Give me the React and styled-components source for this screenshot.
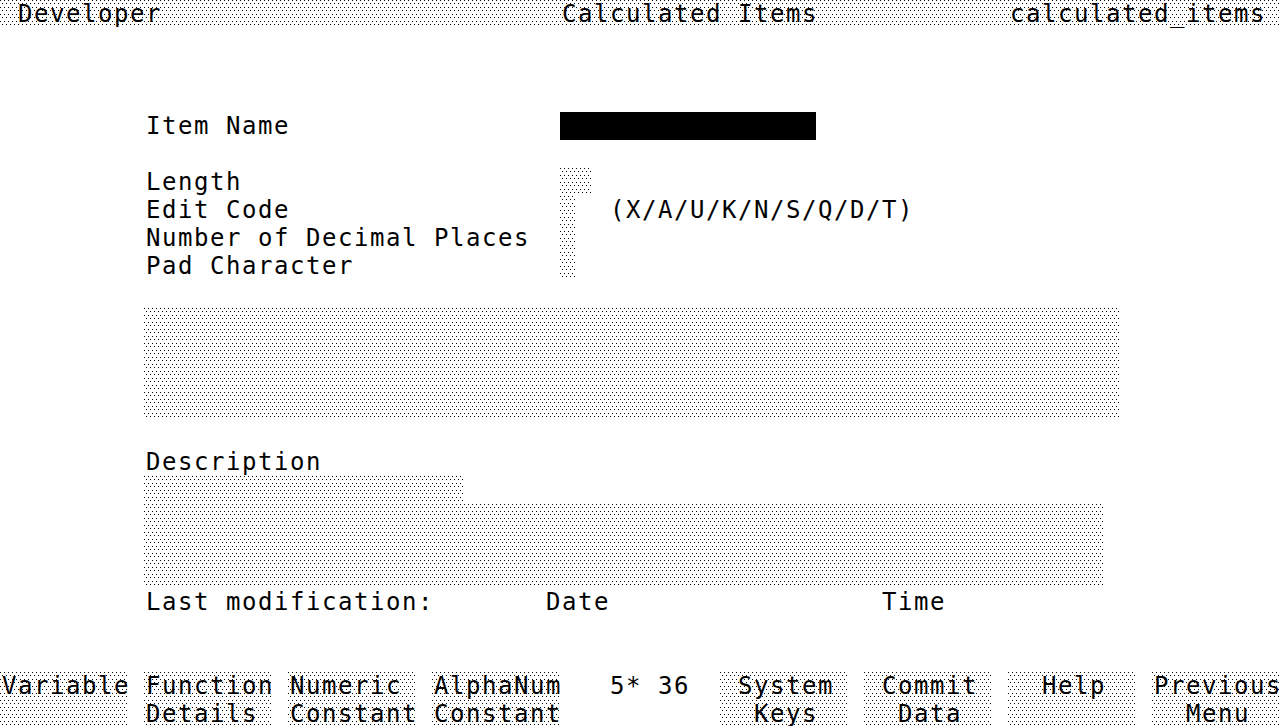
import React from "react";
import styled, { createGlobalStyle } from "styled-components";

// terminal cell: 16px wide, 28px tall, 80 x 26 screen
const COLS = 80;
const ROWS = 26;

const GlobalStyle = createGlobalStyle`
  html, body {
    margin: 0;
    padding: 0;
    background: #ffffff;
    overflow: hidden;
  }
`;

const dots = `
  background-color: #ffffff;
  background-image:
    conic-gradient(at 1px 1px, transparent 75%, #000 0),
    conic-gradient(at 1px 1px, transparent 75%, #000 0);
  background-size: 4px 7px;
  background-position: 0 0, 2px 3px;
`;

const Screen = styled.div`
  display: grid;
  grid-template-columns: repeat(${COLS}, 16px);
  grid-template-rows: repeat(${ROWS}, 28px);
  width: 1280px;
  height: 728px;
  font-family: "DejaVu Sans Mono", "Liberation Mono", monospace;
  font-size: 24px;
  line-height: 28px;
  letter-spacing: 1.552px;
  color: #000;
  white-space: pre;
`;

const TitleBar = styled.div`
  grid-column: 1 / -1;
  grid-row: 1;
  display: grid;
  grid-template-columns: repeat(${COLS}, 16px);
  ${dots}
`;

const TitleText = styled.span`
  grid-column: ${(p) => p.$col} / span ${(p) => p.$len};
  grid-row: 1;
  padding-left: 2px;
`;

const Label = styled.span`
  grid-column: ${(p) => p.$col} / span ${(p) => p.$len};
  grid-row: ${(p) => p.$row};
  padding-left: 2px;
`;

const Field = styled.div`
  grid-column: ${(p) => p.$col} / span ${(p) => p.$span};
  grid-row: ${(p) => p.$row} / span ${(p) => p.$rows || 1};
  ${(p) => (p.$filled ? "background: #000;" : dots)}
`;

const SoftKey = styled.div`
  grid-column: ${(p) => p.$col} / span 8;
  grid-row: 25 / span 2;
  display: flex;
  flex-direction: column;
  ${dots}
`;

const KeyLine = styled.span`
  height: 28px;
  padding-left: 2px;
`;

const softKeys = [
  { col: 1, lines: ["Variable", ""] },
  { col: 10, lines: ["Function", "Details"] },
  { col: 19, lines: ["Numeric", "Constant"] },
  { col: 28, lines: ["AlphaNum", "Constant"] },
  { col: 46, lines: [" System", "  Keys"] },
  { col: 55, lines: [" Commit", "  Data"] },
  { col: 64, lines: ["  Help", ""] },
  { col: 73, lines: ["Previous", "  Menu"] },
];

const labels = [
  { col: 10, row: 5, text: "Item Name" },
  { col: 10, row: 7, text: "Length" },
  { col: 10, row: 8, text: "Edit Code" },
  { col: 39, row: 8, text: "(X/A/U/K/N/S/Q/D/T)" },
  { col: 10, row: 9, text: "Number of Decimal Places" },
  { col: 10, row: 10, text: "Pad Character" },
  { col: 10, row: 17, text: "Description" },
  { col: 10, row: 22, text: "Last modification:" },
  { col: 35, row: 22, text: "Date" },
  { col: 56, row: 22, text: "Time" },
  { col: 39, row: 25, text: "5* 36" },
];

const fields = [
  { col: 36, row: 5, span: 16, filled: true },
  { col: 36, row: 7, span: 2 },
  { col: 36, row: 8, span: 1 },
  { col: 36, row: 9, span: 1 },
  { col: 36, row: 10, span: 1 },
  { col: 10, row: 12, span: 61, rows: 4 },
  { col: 10, row: 18, span: 20 },
  { col: 10, row: 19, span: 60, rows: 3 },
];

const App = () => {
  return (
    <>
      <GlobalStyle />
      <Screen>
        <TitleBar>
          <TitleText $col={2} $len={9}>Developer</TitleText>
          <TitleText $col={36} $len={16}>Calculated Items</TitleText>
          <TitleText $col={64} $len={16}>calculated_items</TitleText>
        </TitleBar>

        {fields.map((f, i) => (
          <Field
            key={i}
            $col={f.col}
            $row={f.row}
            $span={f.span}
            $rows={f.rows}
            $filled={f.filled}
          />
        ))}

        {labels.map((l, i) => (
          <Label key={i} $col={l.col} $row={l.row} $len={l.text.length}>
            {l.text}
          </Label>
        ))}

        {softKeys.map((k) => (
          <SoftKey key={k.col} $col={k.col}>
            {k.lines.map((line, i) => (
              <KeyLine key={i}>{line}</KeyLine>
            ))}
          </SoftKey>
        ))}
      </Screen>
    </>
  );
};

export default App;
